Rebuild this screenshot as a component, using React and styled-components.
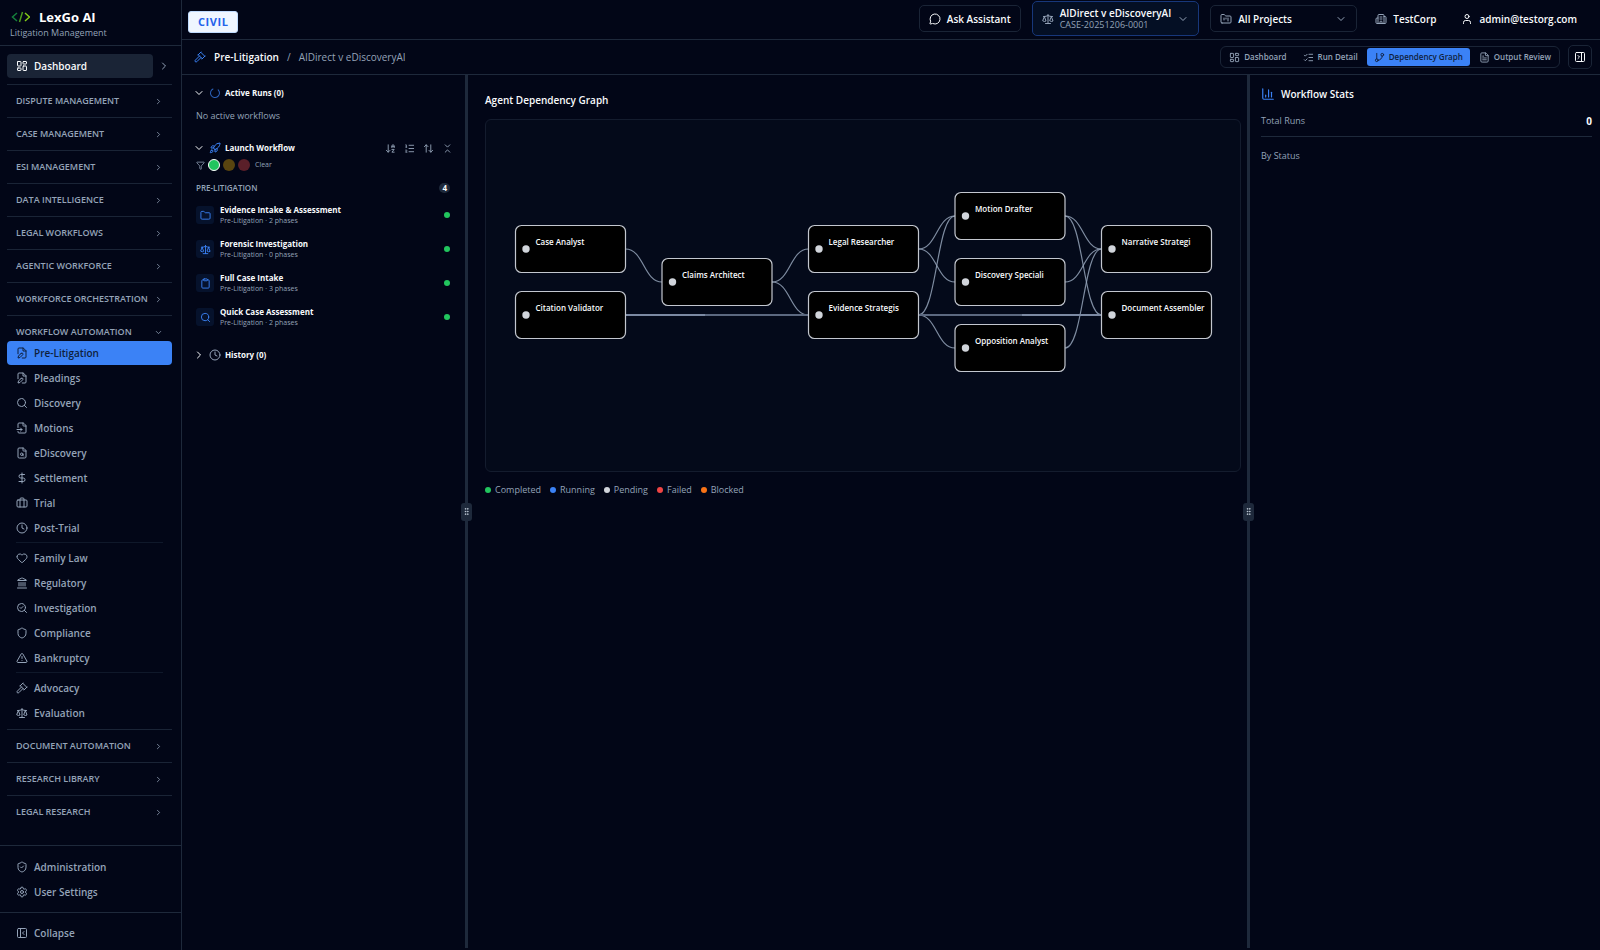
import React from "react";
import styled, { createGlobalStyle } from "styled-components";
import {
  ArrowDownAZ,
  ArrowUpDown,
  Briefcase,
  Building2,
  ChartColumn,
  ChevronDown,
  ChevronRight,
  ChevronsDownUp,
  Clipboard,
  Clock,
  DollarSign,
  FileInput,
  FileSearch,
  FileText,
  Folder,
  FolderKanban,
  Funnel,
  Gavel,
  GitBranch,
  GripVertical,
  Heart,
  Landmark,
  LayoutDashboard,
  ListChecks,
  ListOrdered,
  LoaderCircle,
  MessageCircle,
  PanelLeftClose,
  PanelRightClose,
  Rocket,
  Scale,
  Search,
  SearchCheck,
  Settings,
  Shield,
  ShieldCheck,
  TriangleAlert,
  User,
} from "lucide-react";

const sectionsBefore = [
  "Dispute Management",
  "Case Management",
  "ESI Management",
  "Data Intelligence",
  "Legal Workflows",
  "Agentic Workforce",
  "Workforce Orchestration",
];

const sectionsAfter = ["Document Automation", "Research Library", "Legal Research"];

const workflowGroups = [
  [
    { label: "Pre-Litigation", icon: FileEdit, active: true },
    { label: "Pleadings", icon: FileEdit },
    { label: "Discovery", icon: Search },
    { label: "Motions", icon: FileInput },
    { label: "eDiscovery", icon: FileSearch },
    { label: "Settlement", icon: DollarSign },
    { label: "Trial", icon: Briefcase },
    { label: "Post-Trial", icon: Clock },
  ],
  [
    { label: "Family Law", icon: Heart },
    { label: "Regulatory", icon: Landmark },
    { label: "Investigation", icon: SearchCheck },
    { label: "Compliance", icon: Shield },
    { label: "Bankruptcy", icon: TriangleAlert },
  ],
  [
    { label: "Advocacy", icon: Gavel },
    { label: "Evaluation", icon: Scale },
  ],
];

const tabs = [
  { label: "Dashboard", icon: LayoutDashboard },
  { label: "Run Detail", icon: ListChecks },
  { label: "Dependency Graph", icon: GitBranch, active: true },
  { label: "Output Review", icon: FileText },
];

const workflows = [
  { name: "Evidence Intake & Assessment", phases: 2, icon: Folder },
  { name: "Forensic Investigation", phases: 0, icon: Scale },
  { name: "Full Case Intake", phases: 3, icon: Clipboard },
  { name: "Quick Case Assessment", phases: 2, icon: Search },
];

const legend = [
  { label: "Completed", color: "#22c55e" },
  { label: "Running", color: "#3b82f6" },
  { label: "Pending", color: "#d1d5db" },
  { label: "Failed", color: "#ef4444" },
  { label: "Blocked", color: "#f97316" },
];

const NODE_W = 110;
const NODE_H = 47;

const nodes = {
  analyst: { label: "Case Analyst", x: 29.5, y: 105.5 },
  citation: { label: "Citation Validator", x: 29.5, y: 171.5 },
  claims: { label: "Claims Architect", x: 176, y: 138.5 },
  legal: { label: "Legal Researcher", x: 322.5, y: 105.5 },
  evidence: { label: "Evidence Strategis", x: 322.5, y: 171.5 },
  motion: { label: "Motion Drafter", x: 469, y: 72.5 },
  discovery: { label: "Discovery Speciali", x: 469, y: 138.5 },
  opposition: { label: "Opposition Analyst", x: 469, y: 204.5 },
  narrative: { label: "Narrative Strategi", x: 615.5, y: 105.5 },
  document: { label: "Document Assembler", x: 615.5, y: 171.5 },
};

const edges = [
  ["analyst", "claims"],
  ["claims", "legal"],
  ["claims", "evidence"],
  ["legal", "motion"],
  ["legal", "discovery"],
  ["evidence", "motion"],
  ["evidence", "opposition"],
  ["motion", "narrative"],
  ["motion", "document"],
  ["discovery", "narrative"],
  ["opposition", "narrative"],
];

// long straight runs along the citation row, drawn under the nodes
const runs = [
  { from: 139.5, to: 219, color: "#7c8aa3" },
  { from: 219, to: 322.5, color: "#5c6980" },
  { from: 432.5, to: 536, color: "#5c6980" },
  { from: 536, to: 615.5, color: "#7c8aa3" },
];

function edgePath([from, to]) {
  const x1 = nodes[from].x + NODE_W;
  const y1 = nodes[from].y + NODE_H / 2;
  const x2 = nodes[to].x;
  const y2 = nodes[to].y + NODE_H / 2;
  const mid = (x1 + x2) / 2;
  return `M${x1} ${y1} C${mid} ${y1} ${mid} ${y2} ${x2} ${y2}`;
}

function Logo() {
  return (
    <svg width="20" height="16" viewBox="0 0 20 16" fill="none" strokeWidth="1.5" aria-hidden="true">
      <path d="M7 4 2.500 8 7 12" stroke="#15803d" />
      <path d="M12.500 3 9.500 13" stroke="#4d9c1f" />
      <path d="M15 4l4.500 4-4.500 4" stroke="#84cc16" />
    </svg>
  );
}

function FileEdit({ size }) {
  return (
    <svg
      width={size}
      height={size}
      viewBox="0 0 24 24"
      fill="none"
      stroke="currentColor"
      strokeWidth="2"
      strokeLinecap="round"
      strokeLinejoin="round"
      aria-hidden="true"
    >
      <path d="M4 13.500V4a2 2 0 0 1 2-2h8.500L20 7.500V20a2 2 0 0 1-2 2h-5.500" />
      <path d="M14 2v6h6" />
      <path d="M10.420 12.610a2.100 2.100 0 1 1 2.970 2.970L7.950 21 4 22l.990-3.950 5.430-5.440Z" />
    </svg>
  );
}

function NavSection({ label, open, children }) {
  return (
    <Section $open={open}>
      <SectionButton type="button" aria-expanded={!!open}>
        {label}
        {open ? <ChevronDown size={9} /> : <ChevronRight size={9} />}
      </SectionButton>
      {children}
    </Section>
  );
}

function Sidebar() {
  return (
    <Side>
      <Brand>
        <BrandRow>
          <Logo />
          <BrandName>LexGo AI</BrandName>
        </BrandRow>
        <BrandNote>Litigation Management</BrandNote>
      </Brand>
      <Nav>
        <DashRow>
          <DashLink href="#dashboard">
            <LayoutDashboard size={12} />
            Dashboard
          </DashLink>
          <PlainButton type="button" aria-label="Expand dashboard">
            <ChevronRight size={12} />
          </PlainButton>
        </DashRow>
        {sectionsBefore.map((label) => (
          <NavSection key={label} label={label} />
        ))}
        <NavSection label="Workflow Automation" open>
          <ItemList>
            {workflowGroups.map((group, i) => (
              <React.Fragment key={i}>
                {i > 0 && <ItemDivider />}
                {group.map(({ label, icon: Icon, active }) => (
                  <NavItem key={label} href={`#${label}`} $active={active}>
                    <Icon size={12} />
                    {label}
                  </NavItem>
                ))}
              </React.Fragment>
            ))}
          </ItemList>
        </NavSection>
        {sectionsAfter.map((label) => (
          <NavSection key={label} label={label} />
        ))}
      </Nav>
      <SideFooter>
        <NavItem href="#admin">
          <ShieldCheck size={12} />
          Administration
        </NavItem>
        <NavItem href="#settings">
          <Settings size={12} />
          User Settings
        </NavItem>
      </SideFooter>
      <SideFooter $last>
        <NavItem as="button" type="button">
          <PanelLeftClose size={12} />
          Collapse
        </NavItem>
      </SideFooter>
    </Side>
  );
}

function TopBar() {
  return (
    <Top>
      <CivilBadge>CIVIL</CivilBadge>
      <TopRight>
        <AssistButton type="button">
          <MessageCircle size={12} />
          Ask Assistant
        </AssistButton>
        <CaseButton type="button">
          <Scale size={12} />
          <CaseText>
            <CaseName>AIDirect v eDiscoveryAI</CaseName>
            <CaseId>CASE-20251206-0001</CaseId>
          </CaseText>
          <ChevronDown size={12} />
        </CaseButton>
        <ProjectButton type="button">
          <FolderKanban size={12} />
          <ProjectName>All Projects</ProjectName>
          <ChevronDown size={12} />
        </ProjectButton>
        <Account>
          <Building2 size={12} color="#94a3b8" />
          TestCorp
        </Account>
        <Account>
          <User size={12} />
          admin@testorg.com
        </Account>
      </TopRight>
    </Top>
  );
}

function SubBar() {
  return (
    <Sub>
      <Gavel size={12} color="#3b82f6" />
      <Crumb>Pre-Litigation</Crumb>
      <CrumbMuted>/</CrumbMuted>
      <CrumbMuted>AIDirect v eDiscoveryAI</CrumbMuted>
      <TabGroup>
        {tabs.map(({ label, icon: Icon, active }) => (
          <Tab key={label} type="button" $active={active}>
            <Icon size={11} />
            {label}
          </Tab>
        ))}
      </TabGroup>
      <PanelToggle type="button" aria-label="Toggle stats panel">
        <PanelRightClose size={12} />
      </PanelToggle>
    </Sub>
  );
}

function WorkflowPanel() {
  return (
    <LeftPanel>
      <GroupHead>
        <GroupToggle type="button" aria-expanded="true">
          <ChevronDown size={12} />
          <Spinner size={12} />
          Active Runs (0)
        </GroupToggle>
      </GroupHead>
      <EmptyNote>No active workflows</EmptyNote>
      <GroupHead>
        <GroupToggle type="button" aria-expanded="true">
          <ChevronDown size={12} />
          <Rocket size={12} color="#3b82f6" />
          Launch Workflow
        </GroupToggle>
        <Tools>
          <PlainButton type="button" aria-label="Sort by name">
            <ArrowDownAZ size={11} />
          </PlainButton>
          <PlainButton type="button" aria-label="Sort by order">
            <ListOrdered size={11} />
          </PlainButton>
          <PlainButton type="button" aria-label="Reverse order">
            <ArrowUpDown size={11} />
          </PlainButton>
          <PlainButton type="button" aria-label="Collapse all">
            <ChevronsDownUp size={11} />
          </PlainButton>
        </Tools>
      </GroupHead>
      <FilterRow>
        <Funnel size={9} />
        <Light type="button" aria-label="Green" $color="#22c55e" $on />
        <Light type="button" aria-label="Amber" $color="#594510" />
        <Light type="button" aria-label="Red" $color="#5a1f29" />
        <ClearButton type="button">Clear</ClearButton>
      </FilterRow>
      <CategoryRow>
        Pre-Litigation
        <Count>4</Count>
      </CategoryRow>
      <WorkflowList>
        {workflows.map(({ name, phases, icon: Icon }) => (
          <WorkflowItem key={name}>
            <WorkflowIcon>
              <Icon size={11} />
            </WorkflowIcon>
            <WorkflowText>
              <WorkflowName>{name}</WorkflowName>
              <WorkflowMeta>Pre-Litigation · {phases} phases</WorkflowMeta>
            </WorkflowText>
            <Dot $color="#22c55e" />
          </WorkflowItem>
        ))}
      </WorkflowList>
      <GroupHead>
        <GroupToggle type="button" aria-expanded="false">
          <ChevronRight size={12} />
          <Clock size={12} color="#94a3b8" />
          History (0)
        </GroupToggle>
      </GroupHead>
    </LeftPanel>
  );
}

function GraphPanel() {
  return (
    <Main>
      <MainTitle>Agent Dependency Graph</MainTitle>
      <GraphBox>
        <Graph viewBox="0 0 754 351" role="img" aria-label="Agent Dependency Graph">
          {edges.map((edge) => (
            <path key={edge.join()} d={edgePath(edge)} fill="none" stroke="#94a3b8" strokeOpacity="0.85" strokeWidth="1.2" />
          ))}
          {runs.map((run) => (
            <line key={run.from} x1={run.from} x2={run.to} y1="195" y2="195" stroke={run.color} strokeWidth="2" />
          ))}
          {Object.values(nodes).map((node) => (
            <g key={node.label} transform={`translate(${node.x} ${node.y})`}>
              <rect width={NODE_W} height={NODE_H} rx="6" fill="#000" stroke="#c3c7cf" strokeWidth="1.2" />
              <circle cx="10.500" cy="23.500" r="3.700" fill="#d1d5db" />
              <NodeLabel x="20" y="19.500">
                {node.label}
              </NodeLabel>
            </g>
          ))}
        </Graph>
      </GraphBox>
      <Legend>
        {legend.map(({ label, color }) => (
          <LegendItem key={label}>
            <Dot $color={color} />
            {label}
          </LegendItem>
        ))}
      </Legend>
    </Main>
  );
}

function StatsPanel() {
  return (
    <RightPanel>
      <StatsTitle>
        <ChartColumn size={14} color="#3b82f6" />
        Workflow Stats
      </StatsTitle>
      <StatRow>
        Total Runs
        <StatValue>0</StatValue>
      </StatRow>
      <StatLabel>By Status</StatLabel>
    </RightPanel>
  );
}

export default function App() {
  return (
    <>
      <GlobalStyle />
      <Shell>
        <Sidebar />
        <Page>
          <TopBar />
          <SubBar />
          <Body>
            <WorkflowPanel />
            <Splitter>
              <Grip>
                <GripVertical size={9} />
              </Grip>
            </Splitter>
            <GraphPanel />
            <Splitter>
              <Grip>
                <GripVertical size={9} />
              </Grip>
            </Splitter>
            <StatsPanel />
          </Body>
        </Page>
      </Shell>
    </>
  );
}

const GlobalStyle = createGlobalStyle`
  * {
    box-sizing: border-box;
  }

  body {
    margin: 0;
    background: #020617;
    color: #f8fafc;
    font-family: "Open Sans", "Noto Sans", sans-serif;
    font-size: 10px;
    line-height: 14px;
  }

  button {
    padding: 0;
    border: 0;
    background: none;
    color: inherit;
    font: inherit;
    cursor: pointer;
  }

  a {
    color: inherit;
    text-decoration: none;
  }

  h1, h2, p, ul {
    margin: 0;
    padding: 0;
    font-size: inherit;
  }

  svg {
    flex-shrink: 0;
  }
`;

const Shell = styled.div`
  display: flex;
  height: 100vh;
  overflow: hidden;
`;

const Side = styled.aside`
  display: flex;
  flex-direction: column;
  width: 182px;
  flex-shrink: 0;
  border-right: 1px solid #1e293b;
  color: #94a3b8;
`;

const Brand = styled.div`
  height: 46px;
  padding: 8px 10px 0;
  border-bottom: 1px solid #1e293b;
`;

const BrandRow = styled.div`
  display: flex;
  align-items: center;
  gap: 9px;
  height: 18px;
`;

const BrandName = styled.h1`
  font-size: 13px;
  font-weight: 700;
  color: #fff;
`;

const BrandNote = styled.p`
  font-size: 9px;
`;

const Nav = styled.nav`
  flex: 1;
  min-height: 0;
  padding: 8px 9px 0 7px;
  overflow: hidden;
`;

const DashRow = styled.div`
  display: flex;
  align-items: center;
  gap: 5px;
  margin-bottom: 6px;
  padding-right: 2px;
`;

const NavItem = styled.a`
  display: flex;
  align-items: center;
  gap: 6px;
  width: 100%;
  height: 24px;
  padding: 0 9px;
  border-radius: 4px;
  font-weight: 600;
  background: ${({ $active }) => ($active ? "#3b82f6" : "transparent")};
  color: ${({ $active }) => ($active ? "#0f1f3d" : "#94a3b8")};
`;

const DashLink = styled(NavItem)`
  flex: 1;
  background: #1a2436;
  color: #f8fafc;
`;

const PlainButton = styled.button`
  display: flex;
  color: #94a3b8;
`;

const Section = styled.div`
  padding: 7px 0 ${({ $open }) => ($open ? 4 : 7)}px;
  border-top: 1px solid #1a2436;
`;

const SectionButton = styled.button`
  display: flex;
  align-items: center;
  justify-content: space-between;
  width: 100%;
  height: 18px;
  padding: 0 9px;
  font-size: 9px;
  font-weight: 600;
  text-transform: uppercase;
  white-space: nowrap;
`;

const ItemList = styled.div`
  display: flex;
  flex-direction: column;
  gap: 1px;
`;

const ItemDivider = styled.div`
  height: 1px;
  margin: 1px 9px 2px;
  background: #0f182a;
`;

const SideFooter = styled.div`
  display: flex;
  flex-direction: column;
  gap: 1px;
  padding: ${({ $last }) => ($last ? "8px 9px 5px 7px" : "9px 9px 8px 7px")};
  border-top: 1px solid #1e293b;
`;

const Page = styled.div`
  display: flex;
  flex-direction: column;
  flex: 1;
  min-width: 0;
`;

const Top = styled.header`
  display: flex;
  align-items: center;
  justify-content: space-between;
  height: 40px;
  padding: 0 16px 2px 6px;
  border-bottom: 1px solid #1e293b;
`;

const CivilBadge = styled.span`
  margin-top: 6px;
  padding: 3px 9px;
  border: 1px solid #bfdbfe;
  border-radius: 3px;
  background: #eff6ff;
  color: #2563eb;
  font-size: 11px;
  font-weight: 700;
  letter-spacing: 0.05em;
`;

const TopRight = styled.div`
  display: flex;
  align-items: center;
  gap: 11px;
  font-weight: 600;
`;

const AssistButton = styled.button`
  display: flex;
  align-items: center;
  gap: 6px;
  height: 27px;
  padding: 0 9px;
  border: 1px solid #1a2436;
  border-radius: 5px;
`;

const CaseButton = styled(AssistButton)`
  height: 35px;
  border-color: #17377a;
  background: #040f24;
  text-align: left;
  color: #94a3b8;
`;

const CaseText = styled.span`
  display: flex;
  flex-direction: column;
`;

const CaseName = styled.span`
  line-height: 12px;
  color: #f8fafc;
`;

const CaseId = styled.span`
  font-size: 9px;
  font-weight: 400;
  line-height: 12px;
`;

const ProjectButton = styled(AssistButton)`
  width: 147px;
  color: #94a3b8;
`;

const ProjectName = styled.span`
  flex: 1;
  text-align: left;
  color: #f8fafc;
`;

const Account = styled.div`
  display: flex;
  align-items: center;
  gap: 6px;
  padding: 0 7px;
`;

const Sub = styled.div`
  display: flex;
  align-items: center;
  height: 35px;
  padding: 0 8px 0 12px;
  border-bottom: 1px solid #1e293b;
`;

const Crumb = styled.span`
  margin-left: 8px;
  font-weight: 600;
`;

const CrumbMuted = styled.span`
  margin-left: 8px;
  color: #94a3b8;
`;

const TabGroup = styled.div`
  display: flex;
  gap: 2px;
  margin-left: auto;
  padding: 1px;
  border: 1px solid #1a2436;
  border-radius: 6px;
`;

const Tab = styled.button`
  display: flex;
  align-items: center;
  gap: 4px;
  height: 18px;
  padding: 0 7px;
  border-radius: 3px;
  font-size: 8px;
  font-weight: 600;
  background: ${({ $active }) => ($active ? "#3b82f6" : "transparent")};
  color: ${({ $active }) => ($active ? "#0f1f3d" : "#94a3b8")};
`;

const PanelToggle = styled.button`
  display: flex;
  align-items: center;
  justify-content: center;
  width: 24px;
  height: 24px;
  margin-left: 8px;
  border: 1px solid #1a2436;
  border-radius: 5px;
`;

const Body = styled.div`
  display: flex;
  flex: 1;
  min-height: 0;
  padding-bottom: 2px;
`;

const LeftPanel = styled.section`
  width: 283px;
  flex-shrink: 0;
  padding: 9px 12px 0 11px;
`;

const GroupHead = styled.div`
  display: flex;
  align-items: center;
  justify-content: space-between;
  height: 18px;
`;

const GroupToggle = styled.button`
  display: flex;
  align-items: center;
  gap: 4px;
  font-size: 8px;
  font-weight: 700;
`;

const Spinner = styled(LoaderCircle)`
  color: #2c62bb;
  transform: rotate(-45deg);
`;

const EmptyNote = styled.p`
  padding: 7px 3px 16px;
  font-size: 9px;
  color: #94a3b8;
`;

const Tools = styled.div`
  display: flex;
  gap: 8px;
`;

const FilterRow = styled.div`
  display: flex;
  align-items: center;
  gap: 3px;
  height: 16px;
  padding-left: 3px;
  color: #94a3b8;
`;

const Light = styled.button`
  width: 12px;
  height: 12px;
  border: ${({ $on }) => ($on ? "1px solid #fff" : "0")};
  border-radius: 50%;
  background: ${({ $color }) => $color};
`;

const ClearButton = styled.button`
  margin-left: 2px;
  font-size: 7px;
  font-weight: 500;
`;

const CategoryRow = styled.div`
  display: flex;
  align-items: center;
  justify-content: space-between;
  height: 14px;
  margin: 8px 3px 7px;
  font-size: 8px;
  font-weight: 600;
  text-transform: uppercase;
  color: #94a3b8;
`;

const Count = styled.span`
  padding: 0 3px;
  border-radius: 5px;
  background: #1e293b;
  color: #f8fafc;
  line-height: 10px;
  font-weight: 700;
`;

const WorkflowList = styled.ul`
  list-style: none;
  margin-bottom: 8px;
`;

const WorkflowItem = styled.li`
  display: flex;
  align-items: center;
  gap: 6px;
  height: 34px;
  padding: 0 3px 8px;
`;

const WorkflowIcon = styled.span`
  display: flex;
  align-items: center;
  justify-content: center;
  width: 18px;
  height: 18px;
  border-radius: 3px;
  background: #06122c;
  color: #3b82f6;
`;

const WorkflowText = styled.div`
  flex: 1;
`;

const WorkflowName = styled.p`
  font-size: 8px;
  font-weight: 700;
  line-height: 12px;
`;

const WorkflowMeta = styled.p`
  font-size: 7px;
  line-height: 10px;
  color: #94a3b8;
`;

const Dot = styled.span`
  width: 6px;
  height: 6px;
  border-radius: 50%;
  background: ${({ $color }) => $color};
`;

const Splitter = styled.div`
  display: flex;
  align-items: center;
  justify-content: center;
  width: 3px;
  flex-shrink: 0;
  background: #1e293b;
`;

const Grip = styled.div`
  display: flex;
  align-items: center;
  justify-content: center;
  flex-shrink: 0;
  width: 11px;
  height: 18px;
  border-radius: 3px;
  background: #1e293b;
  color: #cbd5e1;
  z-index: 1;
`;

const Main = styled.main`
  flex: 1;
  min-width: 0;
  padding: 18px 6px 0 17px;
`;

const MainTitle = styled.h2`
  font-weight: 600;
`;

const GraphBox = styled.div`
  margin-top: 12px;
  border: 1px solid #141c2e;
  border-radius: 6px;
  background: #040a1a;
`;

const Graph = styled.svg`
  display: block;
  width: 100%;
`;

const NodeLabel = styled.text`
  fill: #f8fafc;
  font-size: 8px;
  font-weight: 600;
`;

const Legend = styled.div`
  display: flex;
  gap: 9px;
  margin-top: 11px;
  font-size: 9px;
  color: #94a3b8;
`;

const LegendItem = styled.span`
  display: flex;
  align-items: center;
  gap: 4px;
`;

const RightPanel = styled.aside`
  width: 350px;
  flex-shrink: 0;
  padding: 11px 8px 0 11px;
`;

const StatsTitle = styled.h2`
  display: flex;
  align-items: center;
  gap: 6px;
  height: 16px;
  font-weight: 600;
`;

const StatRow = styled.div`
  display: flex;
  align-items: center;
  justify-content: space-between;
  margin-top: 12px;
  padding-bottom: 8px;
  border-bottom: 1px solid #1e293b;
  font-size: 9px;
  color: #94a3b8;
`;

const StatValue = styled.span`
  font-size: 10px;
  font-weight: 700;
  color: #f8fafc;
`;

const StatLabel = styled.p`
  margin-top: 12px;
  font-size: 9px;
  color: #94a3b8;
`;
